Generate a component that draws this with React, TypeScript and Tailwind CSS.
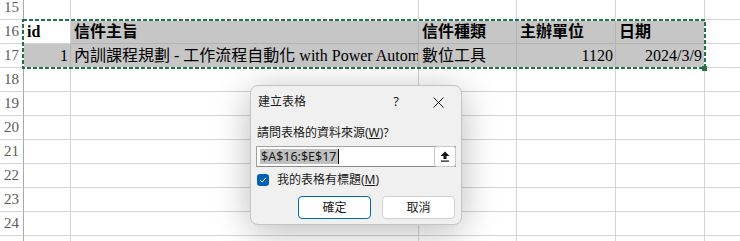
import React from "react";

const serif = { fontFamily: '"Liberation Serif", "Noto Sans CJK TC", serif' };
const ui = { fontFamily: '"Noto Sans", "Noto Sans CJK TC", sans-serif' };

const widths = ["w-[47px]", "w-[348px]", "w-[98px]", "w-[99px]", "w-[89px]"];

type Cell = { text?: string; align?: "left" | "right"; bold?: boolean; sel?: boolean };

function Row({ n, cells, first }: { n: number; cells: Cell[]; first?: boolean }) {
  return (
    <div className="flex h-[24px]">
      <div
        className="w-[24px] shrink-0 border-r border-r-[#a8a8a8] border-b border-b-[#d4d4d4] flex items-center justify-center text-[15px] text-[#5a5a5a]"
        style={serif}
      >
        {n}
      </div>
      {widths.map((w, i) => {
        const c = cells[i] || {};
        return (
          <div
            key={i}
            className={`${w} shrink-0 border-r border-b overflow-hidden whitespace-nowrap flex items-center text-[16px] text-black ${
              c.sel ? "bg-[#c6c6c6] border-[#b3b3b3]" : "bg-white border-[#d4d4d4]"
            } ${c.align === "right" ? "justify-end pr-[2px]" : "pl-[3px]"} ${c.bold ? "font-bold" : ""}`}
            style={serif}
          >
            {c.text}
          </div>
        );
      })}
      <div className="flex-1 border-b border-[#d4d4d4]" />
    </div>
  );
}

export default function App() {
  const rows: { n: number; cells: Cell[] }[] = [
    { n: 15, cells: [] },
    {
      n: 16,
      cells: [
        { text: "id", bold: true },
        { text: "信件主旨", bold: true, sel: true },
        { text: "信件種類", bold: true, sel: true },
        { text: "主辦單位", bold: true, sel: true },
        { text: "日期", bold: true, sel: true },
      ],
    },
    {
      n: 17,
      cells: [
        { text: "1", align: "right", sel: true },
        { text: "內訓課程規劃 - 工作流程自動化 with Power Automate", sel: true },
        { text: "數位工具", sel: true },
        { text: "1120", align: "right", sel: true },
        { text: "2024/3/9", align: "right", sel: true },
      ],
    },
    { n: 18, cells: [] },
    { n: 19, cells: [] },
    { n: 20, cells: [] },
    { n: 21, cells: [] },
    { n: 22, cells: [] },
    { n: 23, cells: [] },
    { n: 24, cells: [] },
    { n: 25, cells: [] },
  ];

  return (
    <div className="relative w-[740px] h-[241px] overflow-hidden bg-white">
      <div className="mt-[-4px]">
        {rows.map((r) => (
          <Row key={r.n} n={r.n} cells={r.cells} />
        ))}
      </div>

      {/* marching ants selection */}
      <svg className="absolute left-[22px] top-[19px]" width="684" height="50">
        <rect x="1" y="1" width="682" height="48" fill="none" stroke="#ffffff" strokeWidth="2" />
        <rect x="1" y="1" width="682" height="48" fill="none" stroke="#217346" strokeWidth="2" strokeDasharray="4 2" />
      </svg>
      <div className="absolute left-[702px] top-[66px] w-[5px] h-[5px] bg-[#217346]" />

      {/* dialog */}
      <div
        className="absolute left-[250px] top-[85px] w-[212px] h-[140px] bg-[#f0f0f0] border border-[#c4c4c4] rounded-[8px] shadow-[0_6px_36px_rgba(0,0,0,0.28)] flex flex-col text-[12px] text-[#1b1b1b]"
        style={ui}
      >
        <div className="h-[32px] flex items-center pl-[7px]">
          <div className="flex-1">建立表格</div>
          <div className="w-[46px] flex justify-center text-[13px]">?</div>
          <div className="w-[42px] pr-[3px] flex justify-center">
            <svg width="11" height="11" viewBox="0 0 11 11">
              <path d="M0.5 0.5 L10.5 10.5 M10.5 0.5 L0.5 10.5" stroke="#1b1b1b" strokeWidth="1" />
            </svg>
          </div>
        </div>
        <div className="px-[5px] flex flex-col">
          <div className="mt-[7px] h-[16px] flex items-center pl-[1px]">
            請問表格的資料來源(<span className="underline">W</span>)?
          </div>
          <div className="mt-[5px] h-[21px] bg-white border border-[#a0a0a0] border-b-[#8a8a8a] flex items-center relative">
            <span className="ml-[3px] bg-[#c0c0c0] text-[12.5px] leading-[15px] px-[1px]">$A$16:$E$17</span>
            <span className="w-[1px] h-[15px] bg-black" />
            <div className="absolute right-[-1px] top-[-1px] w-[22px] h-[21px] bg-white border border-[#c8c8c8] rounded-[3px] flex items-center justify-center">
              <svg width="10" height="11" viewBox="0 0 10 11">
                <path d="M5 0.5 L9.5 5 L6.5 5 L6.5 8 L3.5 8 L3.5 5 L0.5 5 Z" fill="#111" />
                <rect x="1" y="9.5" width="8" height="1.2" fill="#111" />
              </svg>
            </div>
          </div>
          <div className="mt-[7px] h-[12px] flex items-center">
            <div className="w-[12px] h-[12px] ml-[1px] rounded-[3px] bg-[#005fb8] flex items-center justify-center">
              <svg width="8" height="8" viewBox="0 0 8 8">
                <path d="M1.2 4.2 L3.2 6 L6.8 1.8" stroke="white" strokeWidth="1" fill="none" />
              </svg>
            </div>
            <div className="ml-[8px]">
              我的表格有標題(<span className="underline">M</span>)
            </div>
          </div>
          <div className="mt-[10px] flex justify-end gap-[11px] pr-[1px]">
            <div className="w-[73px] h-[23px] bg-white border border-[#0067c0] rounded-[4px] flex items-center justify-center">
              確定
            </div>
            <div className="w-[73px] h-[23px] bg-white border border-[#d2d2d2] rounded-[4px] flex items-center justify-center">
              取消
            </div>
          </div>
        </div>
      </div>
    </div>
  );
}
